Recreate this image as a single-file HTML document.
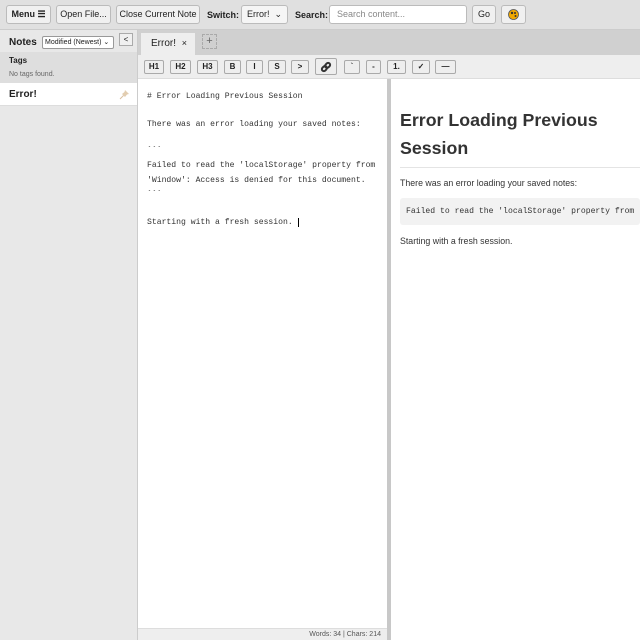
<!DOCTYPE html>
<html><head><style>
*{box-sizing:border-box;margin:0;padding:0}
body{width:640px;height:640px;overflow:hidden;font-family:"Liberation Sans",Arial,sans-serif;background:#e8e8e8;position:relative;font-size:9px;color:#222}
.top{position:absolute;left:0;top:0;width:640px;height:30px;background:#e0e0e0;border-bottom:1px solid #ccc}
.btn{position:absolute;top:5px;height:19px;background:#f0f0f0;border:1px solid #bbb;border-radius:3px;font-size:9px;line-height:17px;text-align:center;color:#222}
.lbl{position:absolute;top:10px;font-weight:bold;font-size:9px}
.side{position:absolute;left:0;top:30px;width:138px;height:610px;background:#e8e8e8;border-right:1px solid #ccc}
.tabbar{position:absolute;left:138px;top:30px;width:502px;height:25px;background:#d0d0d0}
.tb{position:absolute;left:138px;top:55px;width:502px;height:24px;background:#eee;border-bottom:1px solid #ddd}
.tbtn{position:absolute;top:5px;height:14px;background:#eee;border:1px solid #aaa;border-radius:2px;font-size:8px;font-weight:bold;line-height:12px;text-align:center}
.ed{position:absolute;left:138px;top:79px;width:249px;height:549px;background:#fff;font-family:"Liberation Mono",monospace;font-size:8.1px;color:#333}
.ed div{position:absolute;left:9px;white-space:pre}
.dv{position:absolute;left:387px;top:79px;width:4px;height:561px;background:#c8c8c8}
.pv{position:absolute;left:391px;top:79px;width:249px;height:561px;background:#fff;overflow:hidden}
.status{position:absolute;left:138px;top:628px;width:249px;height:12px;background:#eee;border-top:1px solid #ddd;font-size:7px;color:#555;text-align:right;padding-right:6px;line-height:11px}
</style></head><body>
<div class="top">
<div class="btn" style="left:6px;width:45px;font-weight:bold">Menu ☰</div>
<div class="btn" style="left:56px;width:55px">Open File...</div>
<div class="btn" style="left:116px;width:84px">Close Current Note</div>
<div class="lbl" style="left:207px">Switch:</div>
<div class="btn" style="left:241px;width:47px;background:#f5f5f5">Error! &nbsp;⌄</div>
<div class="lbl" style="left:295px">Search:</div>
<div class="btn" style="left:329px;width:138px;background:#fff;text-align:left;padding-left:7px;color:#888">Search content...</div>
<div class="btn" style="left:472px;width:24px">Go</div>
<div class="btn" style="left:501px;width:25px"><svg width="11" height="11" viewBox="0 0 11 11" style="margin-top:3px"><circle cx="5.5" cy="5.5" r="5" fill="#f0a800" stroke="#555" stroke-width="0.8"/><circle cx="4" cy="4" r="1.2" fill="#333"/><circle cx="7" cy="4" r="1" fill="#333"/><circle cx="7.5" cy="7" r="1" fill="#333"/></svg></div>
</div>
<div class="side">
<div style="position:absolute;left:9px;top:7px;font-weight:bold;font-size:10px">Notes</div>
<div style="position:absolute;left:42px;top:6px;width:72px;height:13px;border:1px solid #999;background:#fff;font-size:7px;line-height:11px;padding-left:2px;border-radius:2px">Modified (Newest) ⌄</div>
<div style="position:absolute;left:119px;top:3px;width:14px;height:13px;border:1px solid #aaa;background:#f0f0f0;font-size:8px;text-align:center;line-height:11px">&lt;</div>
<div style="position:absolute;left:0;top:22px;width:137px;height:31px;background:#dedede"></div>
<div style="position:absolute;left:9px;top:26px;font-weight:bold;font-size:8px">Tags</div>
<div style="position:absolute;left:9px;top:41px;font-size:7px;color:#666">No tags found.</div>
<div style="position:absolute;left:0;top:53px;width:137px;height:23px;background:#fff;border-bottom:1px solid #ddd"></div>
<div style="position:absolute;left:9px;top:59px;font-weight:bold;font-size:10px">Error!</div>
<svg style="position:absolute;left:119px;top:59px" width="11" height="11" viewBox="0 0 11 11"><path d="M6 1 L10 5 L8 5.5 L6 8 L3 5 L5.5 3 Z" fill="#e2cdb0"/><path d="M4.5 6.5 L1 10" stroke="#d8bfa0" stroke-width="1"/></svg>
</div>
<div class="tabbar">
<div style="position:absolute;left:3px;top:3px;width:54px;height:22px;background:#eee;font-size:10px;line-height:21px;padding-left:10px">Error! <span style="font-size:9px;margin-left:3px">×</span></div>
<div style="position:absolute;left:64px;top:4px;width:15px;height:15px;border:1px dashed #aaa;text-align:center;font-size:11px;line-height:13px;color:#666">+</div>
</div>
<div class="tb">
<div class="tbtn" style="left:6px;width:20px">H1</div>
<div class="tbtn" style="left:32px;width:21px">H2</div>
<div class="tbtn" style="left:59px;width:21px">H3</div>
<div class="tbtn" style="left:86px;width:17px">B</div>
<div class="tbtn" style="left:108px;width:17px">I</div>
<div class="tbtn" style="left:130px;width:18px">S</div>
<div class="tbtn" style="left:153px;width:18px">&gt;</div>
<div class="tbtn" style="left:177px;width:22px;top:3px;height:17px"><svg width="12" height="12" viewBox="0 0 12 12" style="margin-top:2px"><g transform="rotate(-45 6 6)" fill="none" stroke="#333" stroke-width="2"><rect x="1" y="4" width="5.5" height="4" rx="2"/><rect x="5.5" y="4" width="5.5" height="4" rx="2"/></g></svg></div>
<div class="tbtn" style="left:206px;width:16px">`</div>
<div class="tbtn" style="left:228px;width:15px">-</div>
<div class="tbtn" style="left:249px;width:19px">1.</div>
<div class="tbtn" style="left:274px;width:18px">✓</div>
<div class="tbtn" style="left:297px;width:21px">—</div>
</div>
<div class="ed">
<div style="top:13px"># Error Loading Previous Session</div>
<div style="top:41px">There was an error loading your saved notes:</div>
<div style="top:67px">&#96;&#96;&#96;</div>
<div style="top:82px">Failed to read the 'localStorage' property from</div>
<div style="top:97px">'Window': Access is denied for this document.</div>
<div style="top:111px">&#96;&#96;&#96;</div>
<div style="top:139px">Starting with a fresh session. <span style="border-left:1px solid #000">&nbsp;</span></div>
</div>
<div class="status">Words: 34 | Chars: 214</div>
<div class="dv"></div>
<div class="pv">
<div style="position:absolute;left:9px;top:27px;font-size:17.8px;font-weight:bold;line-height:28px;color:#333;width:235px">Error Loading Previous Session</div>
<div style="position:absolute;left:9px;top:88px;width:240px;border-top:1px solid #e4e4e4"></div>
<div style="position:absolute;left:9px;top:99px;font-size:8.8px;color:#333">There was an error loading your saved notes:</div>
<div style="position:absolute;left:9px;top:119px;width:240px;height:27px;background:#f2f2f2;border-radius:3px;font-family:'Liberation Mono',monospace;font-size:8.1px;line-height:27px;padding-left:6px;white-space:pre;overflow:hidden;color:#333">Failed to read the 'localStorage' property from</div>
<div style="position:absolute;left:9px;top:157px;font-size:8.8px;color:#333">Starting with a fresh session.</div>
</div>
</body></html>
